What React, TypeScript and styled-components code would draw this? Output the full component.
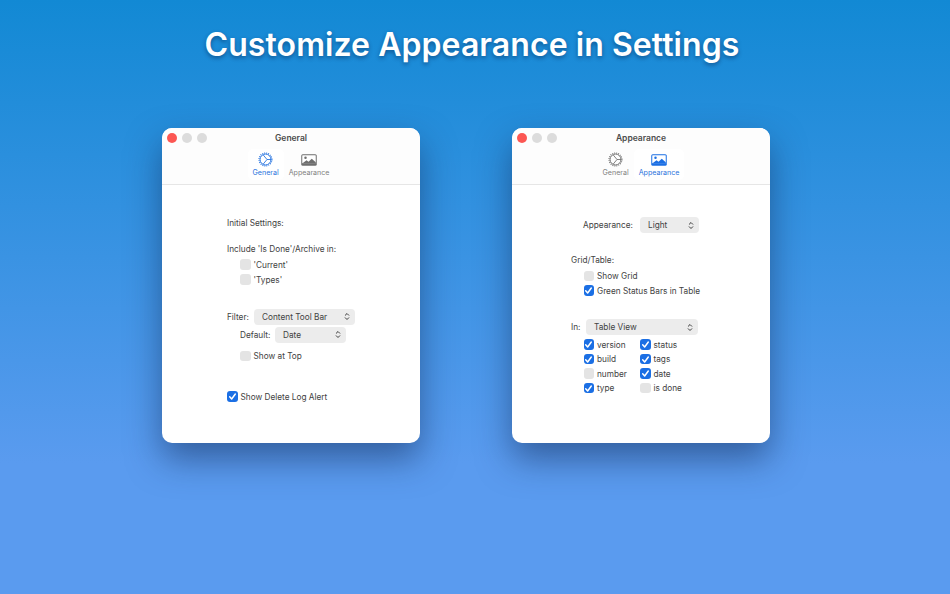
import * as React from 'react'
import styled, { createGlobalStyle } from 'styled-components'

const GlobalStyle = createGlobalStyle`
  html, body {
    margin: 0;
    padding: 0;
  }
  body {
    font-family: Inter, "Noto Sans", "Liberation Sans", sans-serif;
    -webkit-font-smoothing: antialiased;
  }
`
const Page = styled.div`
  width: 950px;
  height: 594px;
  overflow: hidden;
  display: flex;
  flex-direction: column;
  align-items: center;
  background: linear-gradient(180deg, #1289d4 0%, #5a9bef 78%, #5a9bef 100%);
`
const Headline = styled.h1`
  margin: 23px 6px 0 0;
  height: 44px;
  line-height: 44px;
  font-size: 32px;
  letter-spacing: 0.07px;
  font-weight: 600;
  color: #fff;
  text-shadow: 0 2px 4px rgba(0, 20, 60, 0.45);
`
const Windows = styled.div`
  margin: 61px 18px 0 0;
  display: flex;
  gap: 92px;
`
const Window = styled.section`
  width: 258px;
  height: 314.5px;
  display: flex;
  flex-direction: column;
  background: #fff;
  border-radius: 10px;
  overflow: hidden;
  box-shadow: 0 16px 34px rgba(15, 35, 80, 0.5);
`
const TitleBar = styled.header`
  height: 20px;
  display: grid;
  grid-template-columns: 1fr auto 1fr;
  align-items: center;
  padding: 0 5px;
  flex: none;
  background: #fdfdfd;
`
const Lights = styled.div`
  display: flex;
  gap: 5px;
`
const Light = styled.span<{ $red?: boolean }>`
  width: 10px;
  height: 10px;
  border-radius: 50%;
  background: ${p => (p.$red ? '#fc5753' : '#dcdcdc')};
`
const WindowTitle = styled.div`
  font-size: 8.5px;
  font-weight: 600;
  color: #4c4c4c;
`
const Toolbar = styled.nav`
  height: 37px;
  flex: none;
  padding-top: 1px;
  box-sizing: border-box;
  display: flex;
  justify-content: center;
  align-items: flex-start;
  background: #fdfdfd;
  border-bottom: 1px solid #e6e6e6;
`
const Tab = styled.div<{ $active?: boolean }>`
  height: 31px;
  padding: 0 5px;
  display: flex;
  flex-direction: column;
  align-items: center;
  border-radius: 5px;
  font-size: 7.1px;
  line-height: 10px;
  color: ${p => (p.$active ? '#2a72dc' : '#808080')};
  background: ${p => (p.$active ? '#fff' : 'transparent')};
`
const TabIcon = styled.span`
  height: 15px;
  margin: 3px 0 1px;
  display: flex;
  align-items: center;
`
const Body = styled.div<{ $left: number; $top: number }>`
  flex: 1;
  padding: ${p => p.$top}px 0 0 ${p => p.$left}px;
  font-size: 8.25px;
  color: #424242;
`
const Row = styled.div<{ $top?: number; $indent?: number }>`
  height: 14px;
  margin-top: ${p => p.$top ?? 0}px;
  margin-left: ${p => p.$indent ?? 0}px;
  display: flex;
  align-items: center;
  white-space: nowrap;
`
const Label = styled.span<{ $width: number }>`
  width: ${p => p.$width}px;
  flex: none;
`
const CheckRow = styled(Row)`
  gap: 3px;
`
const Box = styled.span<{ $on?: boolean }>`
  width: 10.5px;
  height: 10.5px;
  flex: none;
  border-radius: 3px;
  background: ${p => (p.$on ? '#1b6fe4' : '#e4e4e4')};
  display: flex;
  align-items: center;
  justify-content: center;
`
const Select = styled.div<{ $width: number }>`
  width: ${p => p.$width}px;
  height: 16px;
  flex: none;
  box-sizing: border-box;
  padding: 0 5px 0 8px;
  display: flex;
  align-items: center;
  justify-content: space-between;
  background: #ececec;
  border-radius: 4px;
  color: #424242;
`
const FieldGrid = styled.div`
  margin: 3.5px 0 0 12.5px;
  display: grid;
  grid-template-columns: 56.5px 56.5px;
  grid-auto-rows: 14.5px;
`

const GearIcon = ({ color }: { color: string }) => (
  <svg width="15" height="15" viewBox="0 0 30 30" fill="none" stroke={color}>
    <circle cx="15" cy="15" r="11" strokeWidth="2" />
    <circle cx="15" cy="15" r="13" strokeWidth="2.2" strokeDasharray="1.8 2.28" />
    <path d="M10.5 6 L18 15 L10.5 24 M18 15 H26" strokeWidth="1.7" strokeLinejoin="round" />
  </svg>
)

const PhotoIcon = ({ color }: { color: string }) => (
  <svg width="16" height="12" viewBox="0 0 32 24">
    <rect x="0.5" y="0.5" width="31" height="23" rx="3" fill={color} />
    <rect x="2.5" y="2.5" width="27" height="16" rx="1" fill="#fff" />
    <circle cx="9" cy="7.5" r="2.5" fill={color} />
    <path d="M2.5 19 L11 12.5 L15 15.5 L21.5 9.5 L29.5 16.5 V19 Z" fill={color} />
  </svg>
)

const Chevrons = () => (
  <svg width="6" height="9" viewBox="0 0 12 18" fill="none" stroke="#3c3c3c" strokeWidth="2" strokeLinecap="round" strokeLinejoin="round">
    <path d="M2.5 6.5 L6 3 L9.5 6.5 M2.5 11.5 L6 15 L9.5 11.5" />
  </svg>
)

const Tick = () => (
  <svg width="9" height="9" viewBox="0 0 16 16" fill="none" stroke="#fff" strokeWidth="2.6" strokeLinecap="round" strokeLinejoin="round">
    <path d="M3 8.5 L6.5 12.5 L13 3.5" />
  </svg>
)

const Check = ({ on, children, top, indent }: { on?: boolean; children: React.ReactNode; top?: number; indent?: number }) => (
  <CheckRow $top={top} $indent={indent}>
    <Box $on={on}>{on ? <Tick /> : null}</Box>
    <span>{children}</span>
  </CheckRow>
)

const Chrome = ({ title, active }: { title: string; active: 'General' | 'Appearance' }) => (
  <>
    <TitleBar>
      <Lights>
        <Light $red />
        <Light />
        <Light />
      </Lights>
      <WindowTitle>{title}</WindowTitle>
    </TitleBar>
    <Toolbar>
      <Tab $active={active === 'General'}>
        <TabIcon>
          <GearIcon color={active === 'General' ? '#1f6fe0' : '#6e6e6e'} />
        </TabIcon>
        General
      </Tab>
      <Tab $active={active === 'Appearance'}>
        <TabIcon>
          <PhotoIcon color={active === 'Appearance' ? '#1b6fe4' : '#6e6e6e'} />
        </TabIcon>
        Appearance
      </Tab>
    </Toolbar>
  </>
)

const App = () => (
  <Page>
    <GlobalStyle />
    <Headline>Customize Appearance in Settings</Headline>
    <Windows>
      <Window>
        <Chrome title="General" active="General" />
        <Body $left={65} $top={30.5}>
          <Row>Initial Settings:</Row>
          <Row $top={12}>Include 'Is Done'/Archive in:</Row>
          <Check top={2} indent={13}>'Current'</Check>
          <Check top={1} indent={13}>'Types'</Check>
          <Row $top={23}>
            <Label $width={27}>Filter:</Label>
            <Select $width={101}>
              Content Tool Bar
              <Chevrons />
            </Select>
          </Row>
          <Row $top={4} $indent={13}>
            <Label $width={35}>Default:</Label>
            <Select $width={71}>
              Date
              <Chevrons />
            </Select>
          </Row>
          <Check top={7.5} indent={13}>Show at Top</Check>
          <Check top={26.5} on>Show Delete Log Alert</Check>
        </Body>
      </Window>
      <Window>
        <Chrome title="Appearance" active="Appearance" />
        <Body $left={59} $top={33}>
          <Row $indent={12}>
            <Label $width={57}>Appearance:</Label>
            <Select $width={59}>
              Light
              <Chevrons />
            </Select>
          </Row>
          <Row $top={21}>Grid/Table:</Row>
          <Check top={2} indent={12.5}>Show Grid</Check>
          <Check top={0.5} indent={12.5} on>Green Status Bars in Table</Check>
          <Row $top={22.5}>
            <Label $width={15}>In:</Label>
            <Select $width={112}>
              Table View
              <Chevrons />
            </Select>
          </Row>
          <FieldGrid>
            <Check on>version</Check>
            <Check on>status</Check>
            <Check on>build</Check>
            <Check on>tags</Check>
            <Check>number</Check>
            <Check on>date</Check>
            <Check on>type</Check>
            <Check>is done</Check>
          </FieldGrid>
        </Body>
      </Window>
    </Windows>
  </Page>
)

export default App
